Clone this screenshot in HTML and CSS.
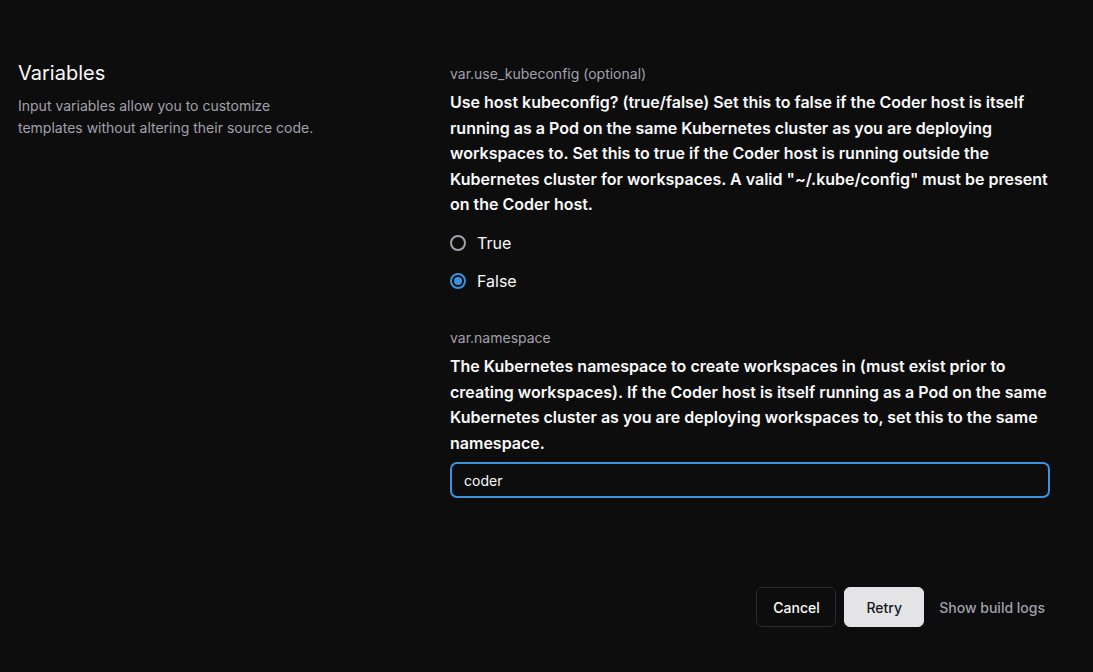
FILE: index.html
```html
<!DOCTYPE html>
<html lang="en">
<head>
<meta charset="utf-8">
<title>Variables</title>
<link rel="stylesheet" href="styles.css">
</head>
<body>
<main class="page">
  <section class="section">
    <div class="section-info">
      <h2 class="section-title">Variables</h2>
      <p class="section-desc">Input variables allow you to customize templates without altering their source code.</p>
    </div>
    <div class="section-fields">
      <div class="field">
        <div class="field-label">var.use_kubeconfig (optional)</div>
        <div class="field-desc">Use host kubeconfig? (true/false) Set this to false if the Coder host is itself running as a Pod on the same Kubernetes cluster as you are deploying workspaces to. Set this to true if the Coder host is running outside the Kubernetes cluster for workspaces. A valid "~/.kube/config" must be present on the Coder host.</div>
        <div class="radio-group">
          <label class="radio-row"><span class="radio"></span><span class="radio-text">True</span></label>
          <label class="radio-row"><span class="radio radio-checked"></span><span class="radio-text">False</span></label>
        </div>
      </div>
      <div class="field field-second">
        <div class="field-label">var.namespace</div>
        <div class="field-desc">The Kubernetes namespace to create workspaces in (must exist prior to creating workspaces). If the Coder host is itself running as a Pod on the same Kubernetes cluster as you are deploying workspaces to, set this to the same namespace.</div>
        <div class="input">coder</div>
      </div>
      <div class="actions">
        <button class="btn btn-outline">Cancel</button>
        <button class="btn btn-primary">Retry</button>
        <button class="btn btn-text">Show build logs</button>
      </div>
    </div>
  </section>
</main>
</body>
</html>
```

FILE: styles.css
```css
html, body {
  margin: 0;
  padding: 0;
  background: #0d0d0e;
}
body {
  font-family: Inter, "Noto Sans", sans-serif;
  color: #fafafa;
  width: 1093px;
  height: 672px;
  overflow: hidden;
}
.page {
  padding: 61px 43px 0 18px;
}
.section {
  display: flex;
  align-items: flex-start;
}
.section-info {
  width: 432px;
  flex-shrink: 0;
}
.section-title {
  margin: 0;
  font-size: 20px;
  line-height: 24px;
  font-weight: 400;
  color: #fafafa;
}
.section-desc {
  margin: 10px 0 0;
  max-width: 310px;
  font-size: 14px;
  line-height: 22px;
  color: #a1a1aa;
}
.section-fields {
  width: 600px;
  padding-top: 3px;
}
.field-label {
  font-size: 14px;
  line-height: 20px;
  color: #a1a1aa;
}
.field-desc {
  margin-top: 6px;
  font-size: 16px;
  line-height: 25.6px;
  font-weight: 600;
  color: #fafafa;
}
.radio-group {
  margin-top: 6px;
  display: flex;
  flex-direction: column;
}
.radio-row {
  height: 38px;
  display: flex;
  align-items: center;
  gap: 11px;
}
.radio {
  width: 16px;
  height: 16px;
  box-sizing: border-box;
  border-radius: 50%;
  border: 2px solid #a1a1aa;
  display: flex;
  align-items: center;
  justify-content: center;
}
.radio-checked {
  border-color: #3b93de;
}
.radio-checked::after {
  content: "";
  width: 8px;
  height: 8px;
  border-radius: 50%;
  background: #3b93de;
}
.radio-text {
  font-size: 16px;
  color: #fafafa;
}
.field-second {
  margin-top: 28px;
}
.input {
  margin-top: 6px;
  height: 36px;
  box-sizing: border-box;
  border: 2px solid #3b93de;
  border-radius: 7px;
  padding: 0 12px;
  display: flex;
  align-items: center;
  font-size: 14px;
  color: #fafafa;
}
.actions {
  margin-top: 89px;
  display: flex;
  justify-content: flex-end;
  gap: 8px;
}
.btn {
  font-family: inherit;
  height: 40px;
  box-sizing: border-box;
  border-radius: 6px;
  font-size: 14px;
  font-weight: 500;
  padding: 0 16px;
  cursor: pointer;
}
.btn-outline {
  width: 80px;
  background: transparent;
  border: 1px solid #2a2a2e;
  color: #fafafa;
}
.btn-primary {
  width: 80px;
  background: #e4e4e7;
  border: 1px solid #e4e4e7;
  color: #18181b;
}
.btn-text {
  background: transparent;
  border: none;
  color: #a1a1aa;
  font-weight: 500;
  padding: 0 5px 0 7px;
}
```
